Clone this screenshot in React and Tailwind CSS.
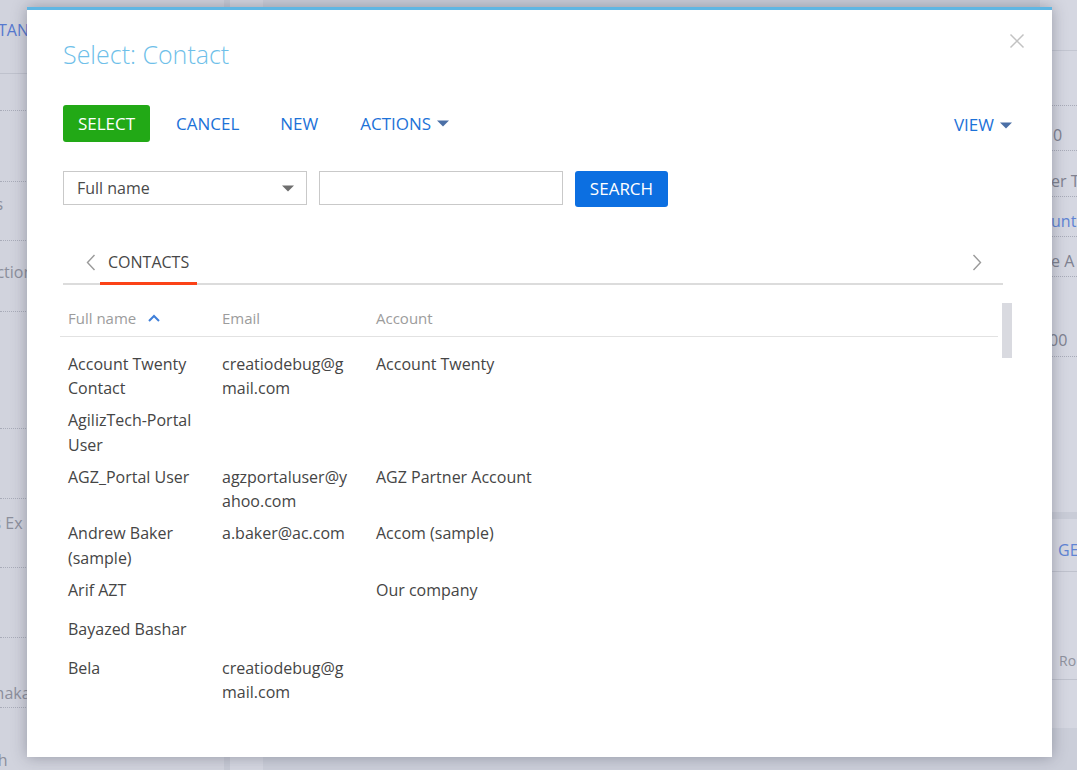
import { useState } from 'react';

const rows = [
  { name: 'Account Twenty Contact', email: 'creatiodebug@gmail.com', account: 'Account Twenty' },
  { name: 'AgilizTech-Portal User', email: '', account: '' },
  { name: 'AGZ_Portal User', email: 'agzportaluser@yahoo.com', account: 'AGZ Partner Account' },
  { name: 'Andrew Baker (sample)', email: 'a.baker@ac.com', account: 'Accom (sample)' },
  { name: 'Arif AZT', email: '', account: 'Our company' },
  { name: 'Bayazed Bashar', email: '', account: '' },
  { name: 'Bela', email: 'creatiodebug@gmail.com', account: '' },
];

function Caret({ className = '' }) {
  return (
    <svg width="12" height="7" viewBox="0 0 12 7" className={className}>
      <path d="M0 0.5 L12 0.5 L6 6.5 Z" fill="currentColor" />
    </svg>
  );
}

function Chevron({ dir }) {
  return (
    <svg width="10" height="17" viewBox="0 0 10 17" className="text-[#9a9a9a]">
      <path
        d={dir === 'left' ? 'M8.5 1 L1.5 8.5 L8.5 16' : 'M1.5 1 L8.5 8.5 L1.5 16'}
        fill="none"
        stroke="currentColor"
        strokeWidth="1.4"
      />
    </svg>
  );
}

// dimmed page behind the lookup dialog
function LeftPanel() {
  const line = 'border-b border-dotted border-[#a9acb9]';
  return (
    <div className="w-[224px] shrink-0 flex flex-col text-[16px] text-[#8c8f9c] whitespace-nowrap overflow-hidden">
      <div className="h-[74px] border-b border-[#bfc2cd] flex items-center pb-[14px]">
        <span className="-ml-[2px] text-[#5679cf]">TANCE</span>
      </div>
      <div className={`h-[37px] ${line}`} />
      <div className={`h-[71px] ${line}`} />
      <div className={`h-[59px] ${line} flex items-start pt-[10px]`}>
        <span className="-ml-[62px]">Contacts</span>
      </div>
      <div className={`h-[71px] ${line} flex items-start pt-[19px]`}>
        <span className="-ml-[49px]">Production</span>
      </div>
      <div className={`h-[117px] ${line}`} />
      <div className={`h-[70px] ${line}`} />
      <div className={`h-[69px] ${line} flex items-start pt-[12px]`}>
        <span className="-ml-[50px]">Others Ex</span>
      </div>
      <div className={`h-[70px] ${line}`} />
      <div className={`h-[70px] ${line} flex items-end pb-[2px]`}>
        <span className="-ml-[17px]">Dhaka</span>
      </div>
      <div className="flex-1 flex items-end">
        <span className="-ml-[43px] -mb-[2px]">Search</span>
      </div>
    </div>
  );
}

function RightPanel() {
  const line = 'border-b border-dotted border-[#a9acb9]';
  return (
    <div className="w-[37px] shrink-0 flex flex-col text-[16px] text-[#7f8290] whitespace-nowrap overflow-hidden bg-[#d5d7e1]">
      <div className="h-[51px] border-b border-[#c3c6d1]" />
      <div className={`h-[55px] ${line}`} />
      <div className={`h-[45px] ${line} flex items-center pl-[13px] pt-[14px]`}>
        <span>0</span>
      </div>
      <div className={`h-[46px] ${line} flex items-center pl-[11px] pt-[14px]`}>
        <span>er Ti</span>
      </div>
      <div className={`h-[40px] ${line} flex items-center pl-[11px] pt-[8px] text-[#5f84d4]`}>
        <span>unt5</span>
      </div>
      <div className={`h-[40px] ${line} flex items-center pl-[11px] pt-[8px]`}>
        <span>e A</span>
      </div>
      <div className={`h-[80px] ${line} flex items-end pl-[9px] pb-[4px]`}>
        <span>00</span>
      </div>
      <div className="h-[155px]" />
      <div className="h-[7px] bg-[#c9ccd7]" />
      <div className="h-[53px] border-b border-[#bfc2cd] flex items-center pl-[18px] pt-[10px] text-[#5f84d4]">
        <span>GE</span>
      </div>
      <div className="h-[108px] border-b border-[#bfc2cd] flex items-end pb-[8px] pl-[19px] text-[14px] text-[#8f929e]">
        <span>Ro</span>
      </div>
      <div className="h-[48px]" />
      <div className="flex-1 bg-[#cbced9]" />
    </div>
  );
}

function Toolbar() {
  return (
    <div className="flex items-center h-[37px] mt-[35px] text-[17px] text-[#1c72d8]">
      <button className="h-[37px] w-[87px] rounded-[3px] bg-[#22a916] text-white">SELECT</button>
      <button className="ml-[26px]">CANCEL</button>
      <button className="ml-[41px]">NEW</button>
      <button className="ml-[42px] flex items-center gap-[6px]">
        ACTIONS
        <Caret className="text-[#4b6fa6]" />
      </button>
      <button className="ml-auto mt-[3px] flex items-center gap-[6px]">
        VIEW
        <Caret className="text-[#4b6fa6]" />
      </button>
    </div>
  );
}

function SearchRow() {
  const [text, setText] = useState('');
  return (
    <div className="flex items-start mt-[29px] h-[36px]">
      <div className="w-[244px] h-[34px] border border-[#c9c9c9] flex items-center pl-[13px] pr-[12px] text-[16px] text-[#4a4a4a]">
        <span className="flex-1">Full name</span>
        <Caret className="text-[#6e6e6e]" />
      </div>
      <input
        value={text}
        onChange={(e) => setText(e.target.value)}
        className="ml-[12px] w-[244px] h-[34px] border border-[#c9c9c9] outline-none px-2"
      />
      <button className="ml-[12px] w-[93px] h-[36px] rounded-[3px] bg-[#0c6fe1] text-white text-[17px]">
        SEARCH
      </button>
    </div>
  );
}

function Tabs() {
  return (
    <div className="mt-[33px] w-[940px] h-[45px] border-b-2 border-[#dcdcdc] flex items-center">
      <div className="ml-[23px] mt-[2px]">
        <Chevron dir="left" />
      </div>
      <div className="relative ml-[4px] h-full flex items-center px-[8px] text-[16px] text-[#474747]">
        CONTACTS
        <span className="absolute left-0 right-0 -bottom-[2px] h-[3px] bg-[#fb4217]" />
      </div>
      <div className="ml-auto mr-[21px] mt-[2px]">
        <Chevron dir="right" />
      </div>
    </div>
  );
}

function Grid() {
  const cell = 'w-[154px] shrink-0 pl-[8px] pr-[14px]';
  return (
    <div className="mt-[15px] -ml-[3px] flex">
      <div className="w-[940px]">
        <div className="h-[37px] border-b border-[#e2e2e2] flex items-center text-[15px] text-[#9c9c9c]">
          <div className={`${cell} flex items-center gap-[12px]`}>
            Full name
            <svg width="12" height="8" viewBox="0 0 12 8">
              <path d="M1 7 L6 2 L11 7" fill="none" stroke="#3f7fd9" strokeWidth="2" />
            </svg>
          </div>
          <div className={cell}>Email</div>
          <div className={cell}>Account</div>
        </div>
        <div className="pt-[11px] text-[16px] leading-[24.5px] text-[#454545]">
          {rows.map((r) => (
            <div key={r.name} className="flex items-start min-h-[39px] py-[3.75px]">
              <div className={`${cell} break-words`}>{r.name}</div>
              <div className={`${cell} break-all`}>{r.email}</div>
              <div className="pl-[8px]">{r.account}</div>
            </div>
          ))}
        </div>
      </div>
      <div className="ml-[4px] w-[10px] pt-[3px]">
        <div className="h-[55px] bg-[#d9dae0]" />
      </div>
    </div>
  );
}

export default function App() {
  return (
    <div
      className="relative w-[1077px] h-[770px] overflow-hidden bg-[#d1d3dd] flex"
      style={{ fontFamily: '"Open Sans", "Liberation Sans", sans-serif' }}
    >
      <LeftPanel />
      <div className="w-[6px] shrink-0 bg-[#c7cad5]" />
      <div className="w-[33px] shrink-0 bg-[#d4d6e0]" />
      <div className="flex-1 bg-[#cbced9]" />
      <RightPanel />

      <div className="absolute left-[27px] top-[7px] w-[1025px] h-[750px] bg-white border-t-[3px] border-[#5fb6e3] shadow-[0_0_14px_rgba(40,44,60,0.35)] pl-[36px] pr-[40px]">
        <button className="absolute top-[23px] right-[27px] text-[#c2c2c2]">
          <svg width="16" height="16" viewBox="0 0 16 16">
            <path d="M1.5 1.5 L14.5 14.5 M14.5 1.5 L1.5 14.5" stroke="currentColor" strokeWidth="1.5" />
          </svg>
        </button>
        <h1 className="mt-[28px] text-[25px] leading-[32px] font-light text-[#6fbfe9]">Select: Contact</h1>
        <Toolbar />
        <SearchRow />
        <Tabs />
        <Grid />
      </div>
    </div>
  );
}
